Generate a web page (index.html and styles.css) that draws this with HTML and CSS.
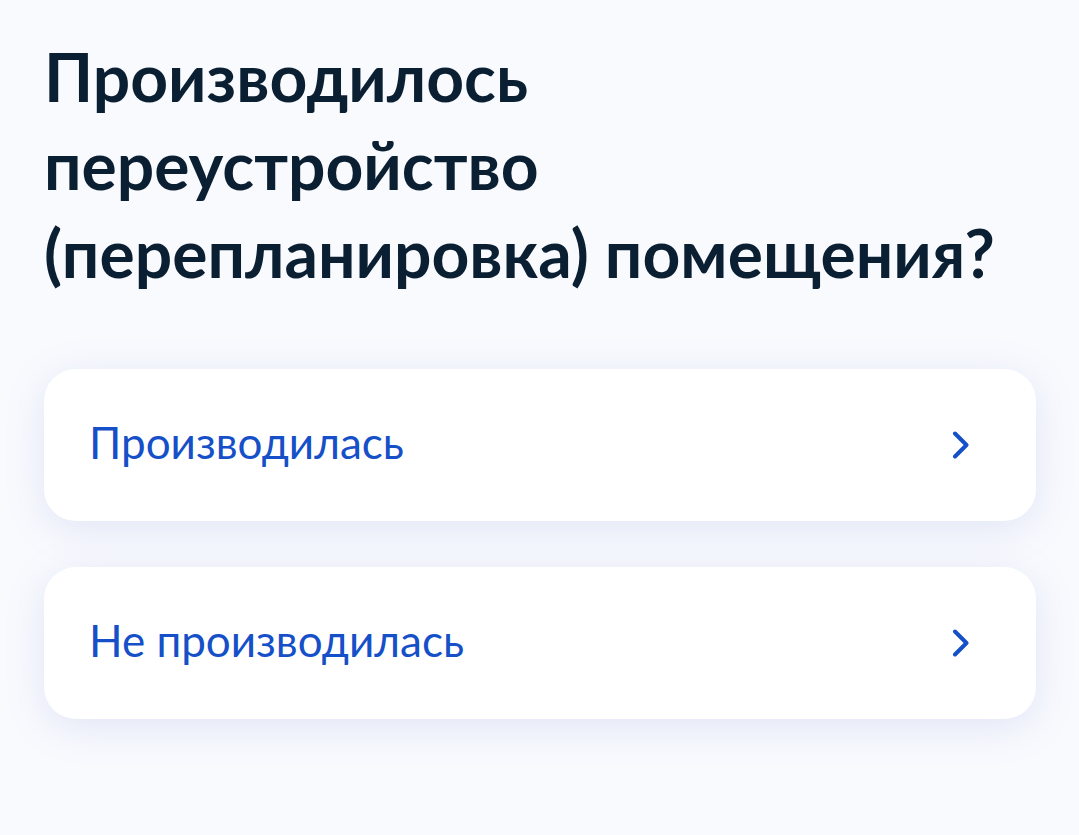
FILE: index.html
```html
<!DOCTYPE html>
<html lang="ru">
<head>
<meta charset="utf-8">
<title>Переустройство</title>
<link rel="stylesheet" href="styles.css">
</head>
<body>
<main class="page">
  <h1 class="title">Производилось переустройство (перепланировка) помещения?</h1>
  <div class="options">
    <a class="option" href="#">
      <span class="option-text">Производилась</span>
      <svg class="chevron" width="20" height="28" viewBox="0 0 20 28" aria-hidden="true"><path d="M4 2.5 L15.5 14 L4 25.5" fill="none" stroke="#1550c8" stroke-width="4" stroke-linecap="round" stroke-linejoin="round"/></svg>
    </a>
    <a class="option" href="#">
      <span class="option-text">Не производилась</span>
      <svg class="chevron" width="20" height="28" viewBox="0 0 20 28" aria-hidden="true"><path d="M4 2.5 L15.5 14 L4 25.5" fill="none" stroke="#1550c8" stroke-width="4" stroke-linecap="round" stroke-linejoin="round"/></svg>
    </a>
  </div>
</main>
</body>
</html>
```
FILE: styles.css
```css
html, body {
  margin: 0;
  padding: 0;
  background: #f9fafe;
  height: 100%;
}
body {
  font-family: Lato, "Open Sans", "Noto Sans", sans-serif;
  color: #0b1f33;
}
.page {
  padding: 33px 43px 0 44px;
}
.title {
  margin: 0;
  font-weight: 700;
  font-size: 66px;
  line-height: 88px;
  color: #0b1f33;
}
.options {
  margin-top: 72px;
  display: flex;
  flex-direction: column;
  gap: 46px;
}
.option {
  display: flex;
  align-items: center;
  justify-content: space-between;
  height: 152px;
  box-sizing: border-box;
  padding: 0 65px 0 45px;
  background: #ffffff;
  border-radius: 32px;
  text-decoration: none;
  box-shadow: 0 8px 40px rgba(102, 126, 196, 0.16);
}
.option-text {
  font-size: 44px;
  line-height: 56px;
  color: #1550c8;
  font-weight: 400;
  position: relative;
  top: -3px;
}
.chevron {
  display: block;
  flex: none;
}
```
